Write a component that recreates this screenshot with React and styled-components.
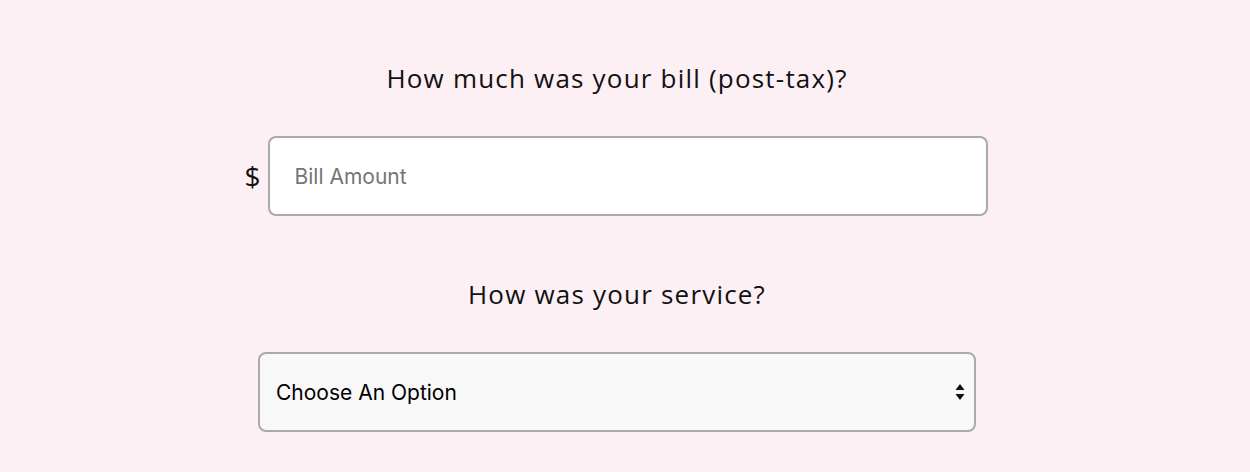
import React from 'react'
import styled, { createGlobalStyle } from 'styled-components'

const GlobalStyle = createGlobalStyle`
    body{
        margin: 0;
        background: #fcf0f4;
        font-family: 'Open Sans', 'Liberation Sans', sans-serif;
    }
`;

const App = () => {
    return(
        <Page>
            <GlobalStyle />
            <Question>How much was your bill (post-tax)?</Question>
            <BillRow>
                <Dollar>$</Dollar>
                <BillInput type='text' placeholder='Bill Amount' />
            </BillRow>

            <Question>How was your service?</Question>
            <SelectWrap>
                <ServiceSelect defaultValue=''>
                    <option value='' disabled>Choose An Option</option>
                    <option value='30'>Outstanding</option>
                    <option value='20'>Good</option>
                    <option value='15'>Okay</option>
                    <option value='5'>Terrible</option>
                </ServiceSelect>
                <Arrows width='10' height='18' viewBox='0 0 10 18'>
                    <path d='M5 1 L9.5 7 L0.5 7 Z' fill='#111' />
                    <path d='M0.5 11 L9.5 11 L5 17 Z' fill='#111' />
                </Arrows>
            </SelectWrap>
        </Page>
    )
}

export default App


//PAGE
const Page = styled.div`
    width: 1234px;
    height: 472px;
    display: flex;
    flex-direction: column;
    align-items: center;
    padding-top: 60px;
    box-sizing: border-box;
`;

//QUESTION
const Question = styled.h2`
    margin: 0;
    font-size: 26px;
    font-weight: 400;
    line-height: 36px;
    letter-spacing: 1.2px;
    color: #111;
`;

//BILL ROW
const BillRow = styled.div`
    display: flex;
    align-items: center;
    gap: 4px;
    margin: 40px 0 60px;
    margin-left: -2px;
`;

const Dollar = styled.span`
    font-size: 28px;
    color: #111;
    width: 19px;
`;

const BillInput = styled.input`
    width: 720px;
    height: 80px;
    box-sizing: border-box;
    border: 2px solid #aaa;
    border-radius: 8px;
    background: #fff;
    padding: 0 25px;
    font-family: 'Inter', 'Liberation Sans', sans-serif;
    font-size: 21px;
    color: #222;
    outline: none;
    &::placeholder{
        color: #757575;
    }
`;

//SELECT
const SelectWrap = styled.div`
    position: relative;
    margin-top: 40px;
`;

const ServiceSelect = styled.select`
    appearance: none;
    width: 718px;
    height: 80px;
    box-sizing: border-box;
    border: 2px solid #aaa;
    border-radius: 8px;
    background: #f8f8f8;
    padding: 0 16px;
    font-family: 'Inter', 'Liberation Sans', sans-serif;
    font-size: 21px;
    color: #000;
    outline: none;
`;

const Arrows = styled.svg`
    position: absolute;
    right: 11px;
    top: 31px;
    pointer-events: none;
`;
